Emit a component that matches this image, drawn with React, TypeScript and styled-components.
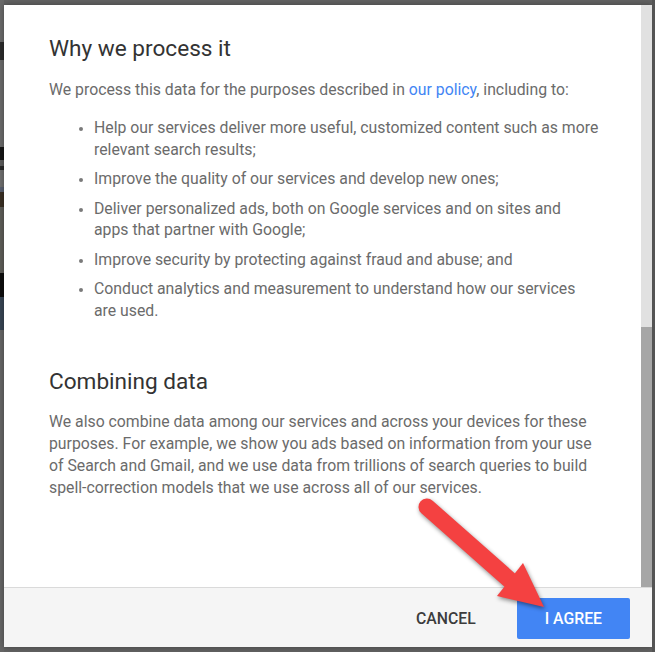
import React from 'react';
import styled, { createGlobalStyle } from 'styled-components';

const GlobalStyle = createGlobalStyle`
  html, body {
    margin: 0;
    padding: 0;
    background: #626262;
  }
  * {
    box-sizing: border-box;
  }
`;

const Page = styled.div`
  position: relative;
  width: 655px;
  height: 652px;
  display: flex;
  background: #626262;
  font-family: Roboto, "Liberation Sans", sans-serif;
  overflow: hidden;
`;

// bit of the page behind the overlay, visible along the left edge
const BehindStrip = styled.div`
  width: 4px;
  flex: none;
  background: linear-gradient(
    to bottom,
    #6a6a6a 0px, #6a6a6a 42px,
    #2c2c2c 42px, #2c2c2c 60px,
    #6a6a6a 60px, #6a6a6a 147px,
    #161616 147px, #161616 160px,
    #5c5c5c 160px, #5c5c5c 166px,
    #2a2a2a 166px, #2a2a2a 170px,
    #6f6f6f 170px, #6f6f6f 187px,
    #596070 187px, #596070 192px,
    #3a3024 192px, #3a3024 207px,
    #5e5d58 207px, #5e5d58 273px,
    #0e0e0e 273px, #0e0e0e 297px,
    #384554 297px, #384554 330px,
    #666666 330px
  );
`;

const DialogColumn = styled.div`
  width: 648px;
  flex: none;
  padding: 5px 0;
`;

const EdgeStrip = styled.div`
  flex: 1;
  background: #545454;
`;

const Dialog = styled.div`
  height: 642px;
  display: flex;
  flex-direction: column;
  background: #fff;
  box-shadow: 0 0 6px rgba(0, 0, 0, 0.35);
`;

const Body = styled.div`
  flex: 1;
  min-height: 0;
  display: flex;
`;

const Content = styled.div`
  flex: 1;
  padding: 29px 41.5px 0 45px;
  overflow: hidden;
`;

const Scrollbar = styled.div`
  width: 11px;
  flex: none;
  background: #e1e1e1;
  display: flex;
  flex-direction: column;
  justify-content: flex-end;
`;

const Thumb = styled.div`
  height: 260px;
  background: #a6a6a6;
`;

const Heading = styled.h2<{ $gap: number }>`
  margin: ${p => p.$gap}px 0 0;
  font-size: 22.6px;
  line-height: 30px;
  font-weight: 400;
  color: #333;
`;

const Text = styled.p<{ $gap: number; $lh: number }>`
  margin: ${p => p.$gap}px 0 0;
  font-size: 15.8px;
  line-height: ${p => p.$lh}px;
  color: #6b6b6b;
`;

const Link = styled.a`
  color: #4285f4;
  text-decoration: none;
`;

const List = styled.ul`
  margin: 16.5px 0 0;
  padding-left: 45px;
`;

const Item = styled.li`
  font-size: 15.8px;
  line-height: 21.5px;
  color: #6b6b6b;
  margin-bottom: 8px;

  &:last-child {
    margin-bottom: 0;
  }

  &::marker {
    color: #7a7a7a;
    font-size: 14px;
  }
`;

const Footer = styled.div`
  height: 60px;
  flex: none;
  display: flex;
  align-items: flex-start;
  justify-content: flex-end;
  gap: 15px;
  padding: 10px 22px 0 0;
  background: #f5f5f5;
  border-top: 1px solid #dadada;
`;

const Button = styled.button<{ $primary?: boolean }>`
  height: 41px;
  padding: 0 ${p => (p.$primary ? 28 : 26)}px;
  border: none;
  border-radius: 2px;
  font-family: inherit;
  font-size: 15.8px;
  font-weight: 500;
  text-transform: uppercase;
  background: ${p => (p.$primary ? '#4285f4' : 'transparent')};
  color: ${p => (p.$primary ? '#fff' : '#3c3c3c')};
  cursor: pointer;
`;

// red annotation arrow drawn over the screenshot
const Annotation = styled.svg`
  position: absolute;
  left: 0;
  top: 0;
  pointer-events: none;
  filter: drop-shadow(1px 2px 2px rgba(0, 0, 0, 0.45));
`;

const App: React.FC = () => {
  return (
    <Page>
      <GlobalStyle />
      <BehindStrip />
      <DialogColumn>
        <Dialog>
          <Body>
            <Content>
              <Heading $gap={0}>Why we process it</Heading>
              <Text $gap={15} $lh={21.5}>
                We process this data for the purposes described in <Link href="#">our policy</Link>, including to:
              </Text>
              <List>
                <Item>Help our services deliver more useful, customized content such as more relevant search results;</Item>
                <Item>Improve the quality of our services and develop new ones;</Item>
                <Item>Deliver personalized ads, both on Google services and on sites and<br />apps that partner with Google;</Item>
                <Item>Improve security by protecting against fraud and abuse; and</Item>
                <Item>Conduct analytics and measurement to understand how our services are used.</Item>
              </List>
              <Heading $gap={45.75}>Combining data</Heading>
              <Text $gap={13.85} $lh={22.3}>
                We also combine data among our services and across your devices for these purposes. For example, we show you ads based on information from your use of Search and Gmail, and we use data from trillions of search queries to build spell-correction models that we use across all of our services.
              </Text>
            </Content>
            <Scrollbar>
              <Thumb />
            </Scrollbar>
          </Body>
          <Footer>
            <Button>Cancel</Button>
            <Button $primary>I agree</Button>
          </Footer>
        </Dialog>
      </DialogColumn>
      <EdgeStrip />
      <Annotation width="655" height="652" viewBox="0 0 655 652">
        <line x1="427" y1="507" x2="513" y2="583" stroke="#f44141" strokeWidth="17" strokeLinecap="round" />
        <polygon points="523,563 497,596 544,607" fill="#f44141" />
      </Annotation>
    </Page>
  );
};

export default App;
